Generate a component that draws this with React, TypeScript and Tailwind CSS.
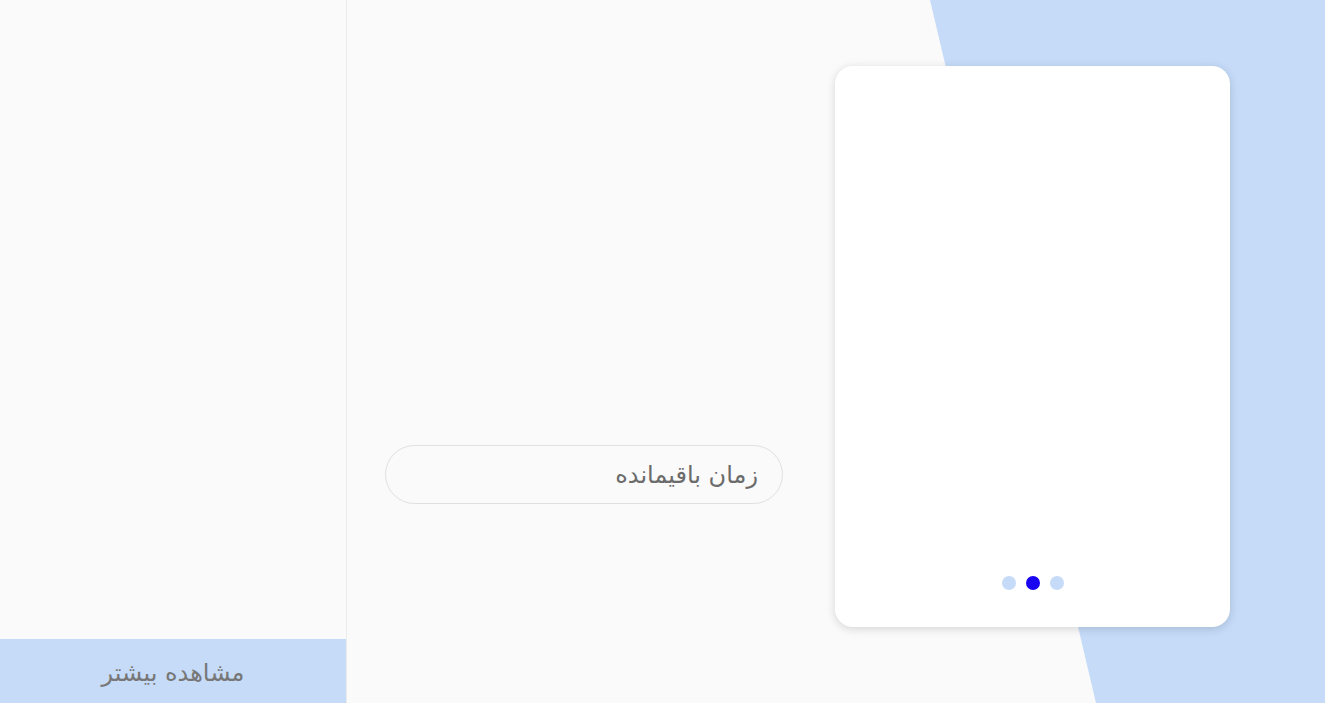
export default function App() {
  return (
    <div
      className="flex h-[703px] w-[1325px] overflow-hidden bg-[#fafafa]"
      style={{ fontFamily: '"DejaVu Sans", "Noto Sans", sans-serif' }}
    >
      {/* sidebar */}
      <aside className="flex w-[347px] shrink-0 flex-col border-r border-[#ececec] bg-[#fafafa]">
        <div className="flex-1" />
        <div
          dir="rtl"
          className="flex h-16 items-center justify-center bg-[#c5dbf8] pt-1 text-[24px] text-[#777777]"
        >
          مشاهده بیشتر
        </div>
      </aside>

      {/* main */}
      <main className="relative flex-1">
        <div className="absolute inset-0 bg-[#c5dbf8] [clip-path:polygon(583px_0,100%_0,100%_100%,749px_100%)]" />
        <div className="relative flex items-start pl-[38px]">
          <div
            dir="rtl"
            className="mt-[445px] flex h-[59px] w-[398px] items-center rounded-full border border-[#e0e0e0] bg-[#fafafa] pr-6 text-[24px] text-[#6b6b6b]"
          >
            زمان باقیمانده
          </div>
          <div className="ml-[52px] mt-[66px] flex h-[561px] w-[395px] flex-col justify-end rounded-[18px] bg-white pb-[37px] shadow-[0_2px_10px_rgba(0,0,0,0.15)]">
            <div className="flex justify-center gap-[10px] pl-[1px]">
              <span className="h-[14px] w-[14px] rounded-full bg-[#c5dbf8]" />
              <span className="h-[14px] w-[14px] rounded-full bg-[#1a05f2]" />
              <span className="h-[14px] w-[14px] rounded-full bg-[#c5dbf8]" />
            </div>
          </div>
        </div>
      </main>
    </div>
  );
}
